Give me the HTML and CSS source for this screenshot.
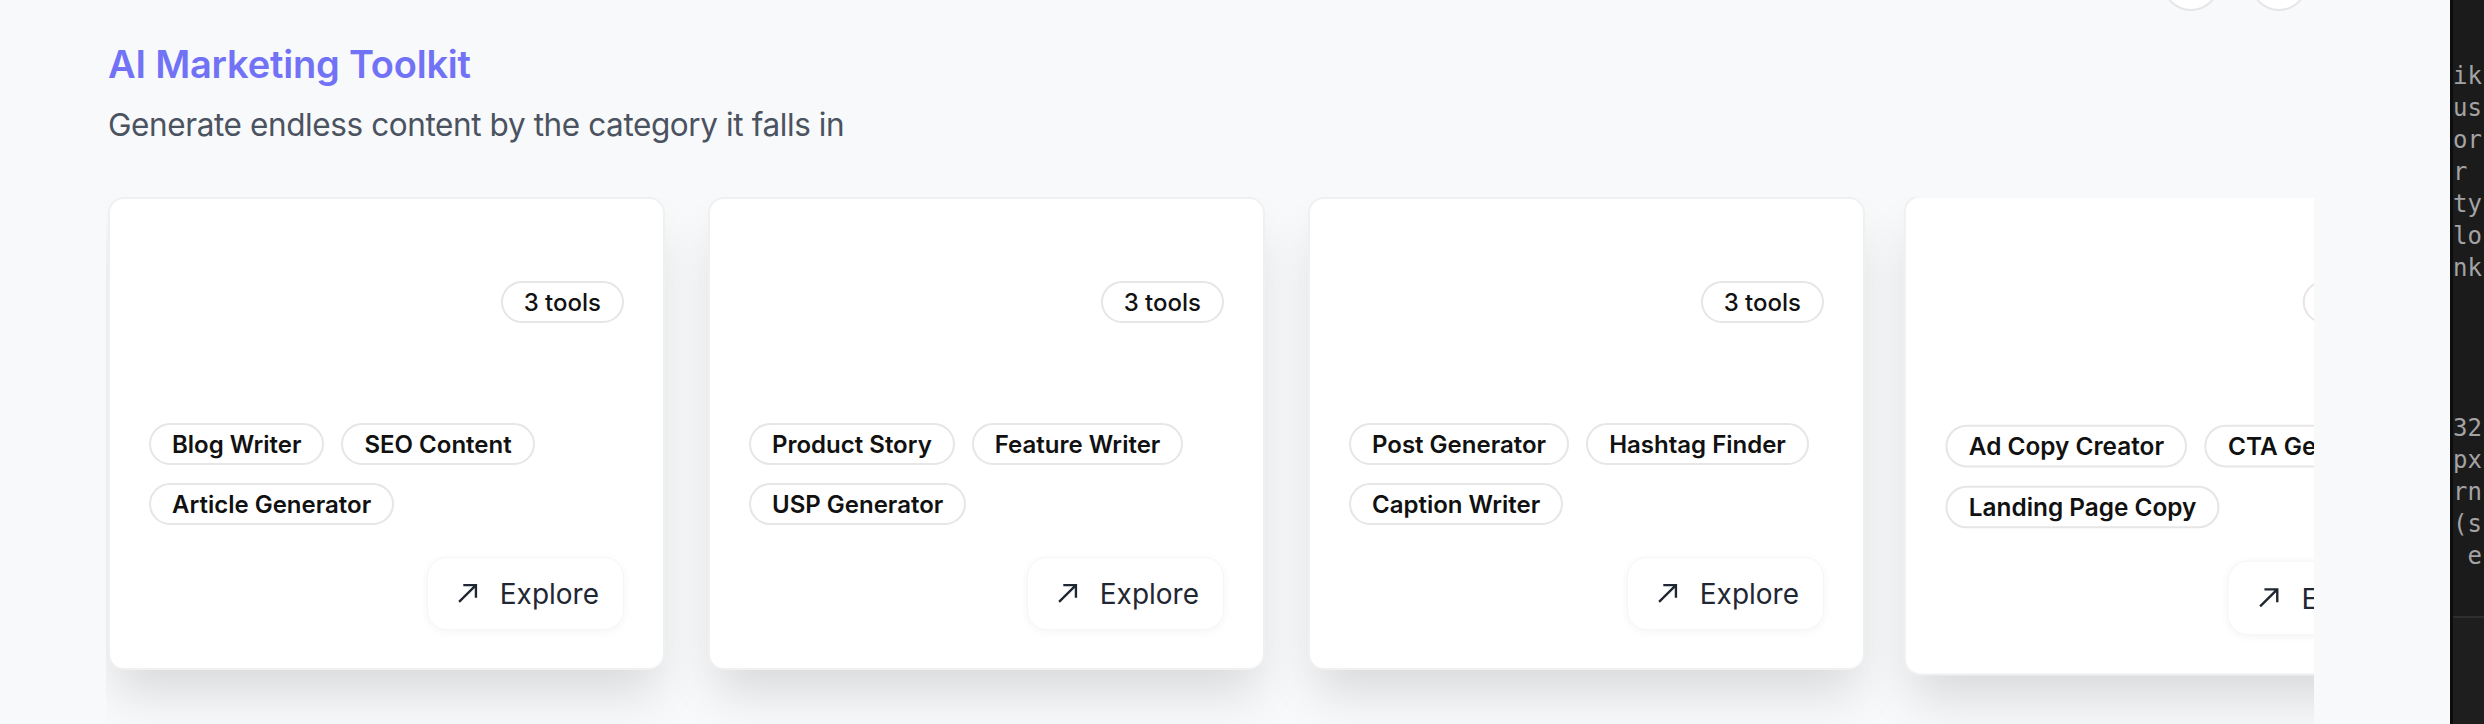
FILE: index.html
```html
<!DOCTYPE html>
<html lang="en">
<head>
<meta charset="utf-8">
<title>AI Marketing Toolkit</title>
<link rel="stylesheet" href="styles.css">
</head>
<body>
<main class="main">
  <div class="nav-row">
    <button class="nav-btn" aria-label="Previous"></button>
    <button class="nav-btn" aria-label="Next"></button>
  </div>
  <h1 class="title">AI Marketing Toolkit</h1>
  <p class="subtitle">Generate endless content by the category it falls in</p>
  <div class="scroller">
    <div class="track">
      <article class="card">
        <div class="card-head"><span class="count">3 tools</span></div>
        <div class="tags">
          <span class="tag">Blog Writer</span>
          <span class="tag">SEO Content</span>
          <span class="tag">Article Generator</span>
        </div>
        <div class="card-foot">
          <button class="explore"><svg class="arrow" viewBox="0 0 24 24" fill="none" stroke="currentColor" stroke-width="2.1" stroke-linecap="butt" stroke-linejoin="miter"><path d="M4.5 19.5l15-15M8.25 4.5h11.25v11.25"/></svg><span>Explore</span></button>
        </div>
      </article>
      <article class="card">
        <div class="card-head"><span class="count">3 tools</span></div>
        <div class="tags">
          <span class="tag">Product Story</span>
          <span class="tag">Feature Writer</span>
          <span class="tag">USP Generator</span>
        </div>
        <div class="card-foot">
          <button class="explore"><svg class="arrow" viewBox="0 0 24 24" fill="none" stroke="currentColor" stroke-width="2.1" stroke-linecap="butt" stroke-linejoin="miter"><path d="M4.5 19.5l15-15M8.25 4.5h11.25v11.25"/></svg><span>Explore</span></button>
        </div>
      </article>
      <article class="card">
        <div class="card-head"><span class="count">3 tools</span></div>
        <div class="tags">
          <span class="tag">Post Generator</span>
          <span class="tag">Hashtag Finder</span>
          <span class="tag">Caption Writer</span>
        </div>
        <div class="card-foot">
          <button class="explore"><svg class="arrow" viewBox="0 0 24 24" fill="none" stroke="currentColor" stroke-width="2.1" stroke-linecap="butt" stroke-linejoin="miter"><path d="M4.5 19.5l15-15M8.25 4.5h11.25v11.25"/></svg><span>Explore</span></button>
        </div>
      </article>
      <article class="card card-hover">
        <div class="card-head"><span class="count">3 tools</span></div>
        <div class="tags">
          <span class="tag">Ad Copy Creator</span>
          <span class="tag">CTA Generator</span>
          <span class="tag">Landing Page Copy</span>
        </div>
        <div class="card-foot">
          <button class="explore"><svg class="arrow" viewBox="0 0 24 24" fill="none" stroke="currentColor" stroke-width="2.1" stroke-linecap="butt" stroke-linejoin="miter"><path d="M4.5 19.5l15-15M8.25 4.5h11.25v11.25"/></svg><span>Explore</span></button>
        </div>
      </article>
    </div>
  </div>
</main>
<aside class="editor">
  <pre class="code">ik
us
or
r
ty
lo
nk




32
px
rn
(s
 e</pre>
  <div class="editor-bar"></div>
</aside>
</body>
</html>
```
FILE: styles.css
```css
* { box-sizing: border-box; }

html, body {
  margin: 0;
  height: 724px;
  overflow: hidden;
}

body {
  display: flex;
  background: #f8f9fb;
  font-family: Inter, "Noto Sans", sans-serif;
}

.main {
  flex: 1;
  min-width: 0;
  padding: 0 136px 0 106px;
  display: flex;
  flex-direction: column;
}

.nav-row {
  display: flex;
  justify-content: flex-end;
  gap: 30px;
  margin-top: -47px;
  padding-right: 6px;
}

.nav-btn {
  width: 58px;
  height: 58px;
  border-radius: 50%;
  background: #ffffff;
  border: 2px solid #e6e6e8;
  padding: 0;
}

.title {
  margin: 30px 0 0 2px;
  font-size: 38px;
  line-height: 46px;
  font-weight: 600;
  color: #7272f7;
  letter-spacing: -0.2px;
}

.subtitle {
  margin: 18px 0 0 2px;
  font-size: 31.5px;
  line-height: 40px;
  font-weight: 400;
  letter-spacing: -0.4px;
  color: #4b5260;
}

.scroller {
  margin-top: 52px;
  overflow: hidden;
  padding: 0 0 120px 2px;
}

.track {
  display: flex;
  gap: 43px;
}

.card {
  flex: 0 0 557px;
  height: 473px;
  background: #ffffff;
  border: 2px solid #f0f0f1;
  border-radius: 16px;
  padding: 38px 36px 38px 39px;
  display: flex;
  flex-direction: column;
  box-shadow: 0 30px 50px -8px rgba(0, 0, 0, 0.13);
}

.card-hover {
  transform: translateY(2px) scale(1.015);
}

.card-head {
  height: 130px;
  display: flex;
  align-items: center;
  justify-content: flex-end;
  padding-right: 2px;
}

.count {
  height: 42px;
  padding: 0 21px;
  display: inline-flex;
  align-items: center;
  border: 2px solid #e7e5e5;
  border-radius: 999px;
  font-size: 24px;
  font-weight: 500;
  color: #111111;
  margin-right: 1px;
}

.tags {
  margin-top: 56px;
  display: flex;
  flex-wrap: wrap;
  gap: 18px 17px;
}

.tag {
  height: 42px;
  padding: 0 21px;
  display: inline-flex;
  align-items: center;
  border: 2px solid #e7e5e5;
  border-radius: 999px;
  font-size: 24px;
  font-weight: 600;
  color: #111111;
  white-space: nowrap;
}

.card-foot {
  margin-top: auto;
  display: flex;
  justify-content: flex-end;
  padding-right: 2px;
}

.explore {
  height: 73px;
  padding: 0 24px 0 26px;
  display: inline-flex;
  align-items: center;
  gap: 19px;
  background: #ffffff;
  border: 1px solid #f6f6f7;
  border-radius: 20px;
  box-shadow: 0 2px 8px rgba(0, 0, 0, 0.045);
  font-family: Inter, "Noto Sans", sans-serif;
  font-size: 28px;
  font-weight: 400;
  color: #1f2733;
  margin-right: 1px;
}

.arrow {
  width: 27px;
  height: 27px;
  color: #1f2733;
}

.editor {
  width: 34px;
  flex: 0 0 34px;
  background: #1b1b1b;
  border-left: 3px solid #0d0d0d;
  overflow: hidden;
  display: flex;
  flex-direction: column;
}

.code {
  margin: 60px 0 0 0;
  font-family: "DejaVu Sans Mono", "Liberation Mono", monospace;
  font-size: 24px;
  line-height: 32px;
  color: #a3a3a5;
  white-space: pre;
}

.editor-bar {
  margin-top: 44px;
  border-top: 2px solid #2e2e2e;
  flex: 1;
  background: #1e1e1e;
}
```
